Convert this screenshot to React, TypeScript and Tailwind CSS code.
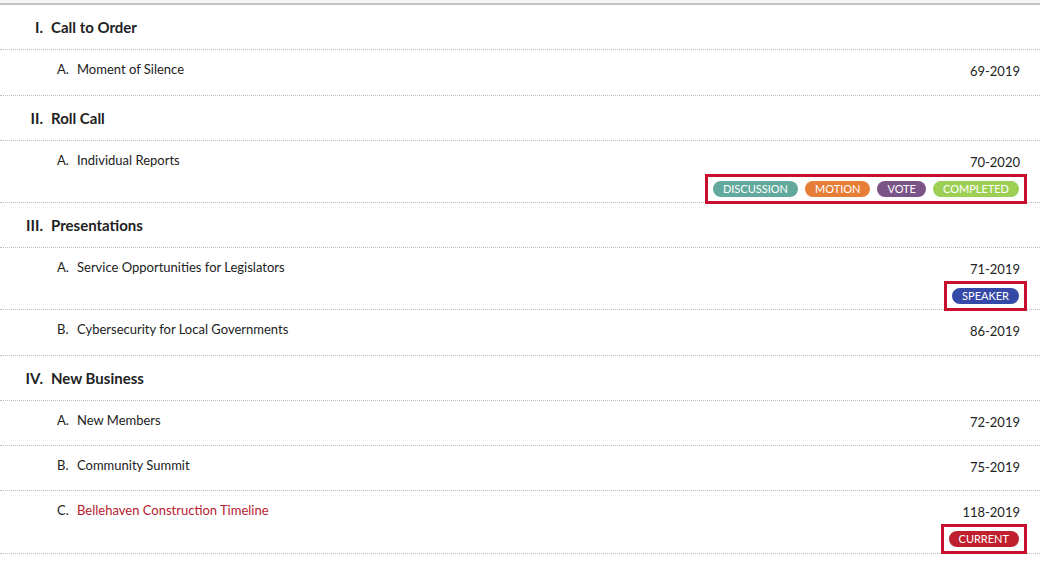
import React from "react";

type Item = { l: string; t: string; n: string; red?: boolean; badges?: [string, string][]; h: number };
const secs: { r: string; t: string; items: Item[] }[] = [
  { r: "I.", t: "Call to Order", items: [{ l: "A.", t: "Moment of Silence", n: "69-2019", h: 45 }] },
  { r: "II.", t: "Roll Call", items: [{ l: "A.", t: "Individual Reports", n: "70-2020", h: 61, badges: [["DISCUSSION", "bg-[#62a99d]"], ["MOTION", "bg-[#e67e38]"], ["VOTE", "bg-[#7b5487]"], ["COMPLETED", "bg-[#9dcf55]"]] }] },
  { r: "III.", t: "Presentations", items: [
    { l: "A.", t: "Service Opportunities for Legislators", n: "71-2019", h: 61, badges: [["SPEAKER", "bg-[#3549a8]"]] },
    { l: "B.", t: "Cybersecurity for Local Governments", n: "86-2019", h: 45 },
  ] },
  { r: "IV.", t: "New Business", items: [
    { l: "A.", t: "New Members", n: "72-2019", h: 44 },
    { l: "B.", t: "Community Summit", n: "75-2019", h: 44 },
    { l: "C.", t: "Bellehaven Construction Timeline", n: "118-2019", h: 62, red: true, badges: [["CURRENT", "bg-[#c0202e]"]] },
  ] },
];

export default function App() {
  return (
    <div className="w-[1040px] h-[565px] bg-white overflow-hidden text-[#222]" style={{ fontFamily: "Lato, 'Open Sans', sans-serif" }}>
      <div className="h-[5px] bg-[#f4f4f4] border-b-2 border-[#c4c4c4]" />
      {secs.map((s) => (
        <div key={s.r}>
          <div className="h-[45px] border-b border-dotted border-[#bdbdbd] flex items-center">
            <div className="w-[51px] text-right text-[15px] font-bold pr-[8px]">{s.r}</div>
            <div className="text-[15px] font-bold">{s.t}</div>
          </div>
          {s.items.map((it) => (
            <div key={it.n} className="border-b border-dotted border-[#bdbdbd] flex pt-[10px] pr-[20px]" style={{ height: it.h + 1 }}>
              <div className="w-[77px] pl-[57px] text-[13px]">{it.l}</div>
              <div className={`flex-1 text-[13px] ${it.red ? "text-[#b5202e]" : ""}`}>{it.t}</div>
              <div className="flex flex-col items-end">
                <div className="text-[13px] mt-[2px]">{it.n}</div>
                {it.badges && (
                  <div className="mt-[1px] -mr-[7px] border-[3px] border-[#c8102e] px-[5px] py-[4px] flex gap-[7px]">
                    {it.badges.map(([b, c]) => (
                      <span key={b} className={`${c} text-white text-[11px] leading-[16px] h-[16px] px-[10px] rounded-full`}>{b}</span>
                    ))}
                  </div>
                )}
              </div>
            </div>
          ))}
        </div>
      ))}
    </div>
  );
}
